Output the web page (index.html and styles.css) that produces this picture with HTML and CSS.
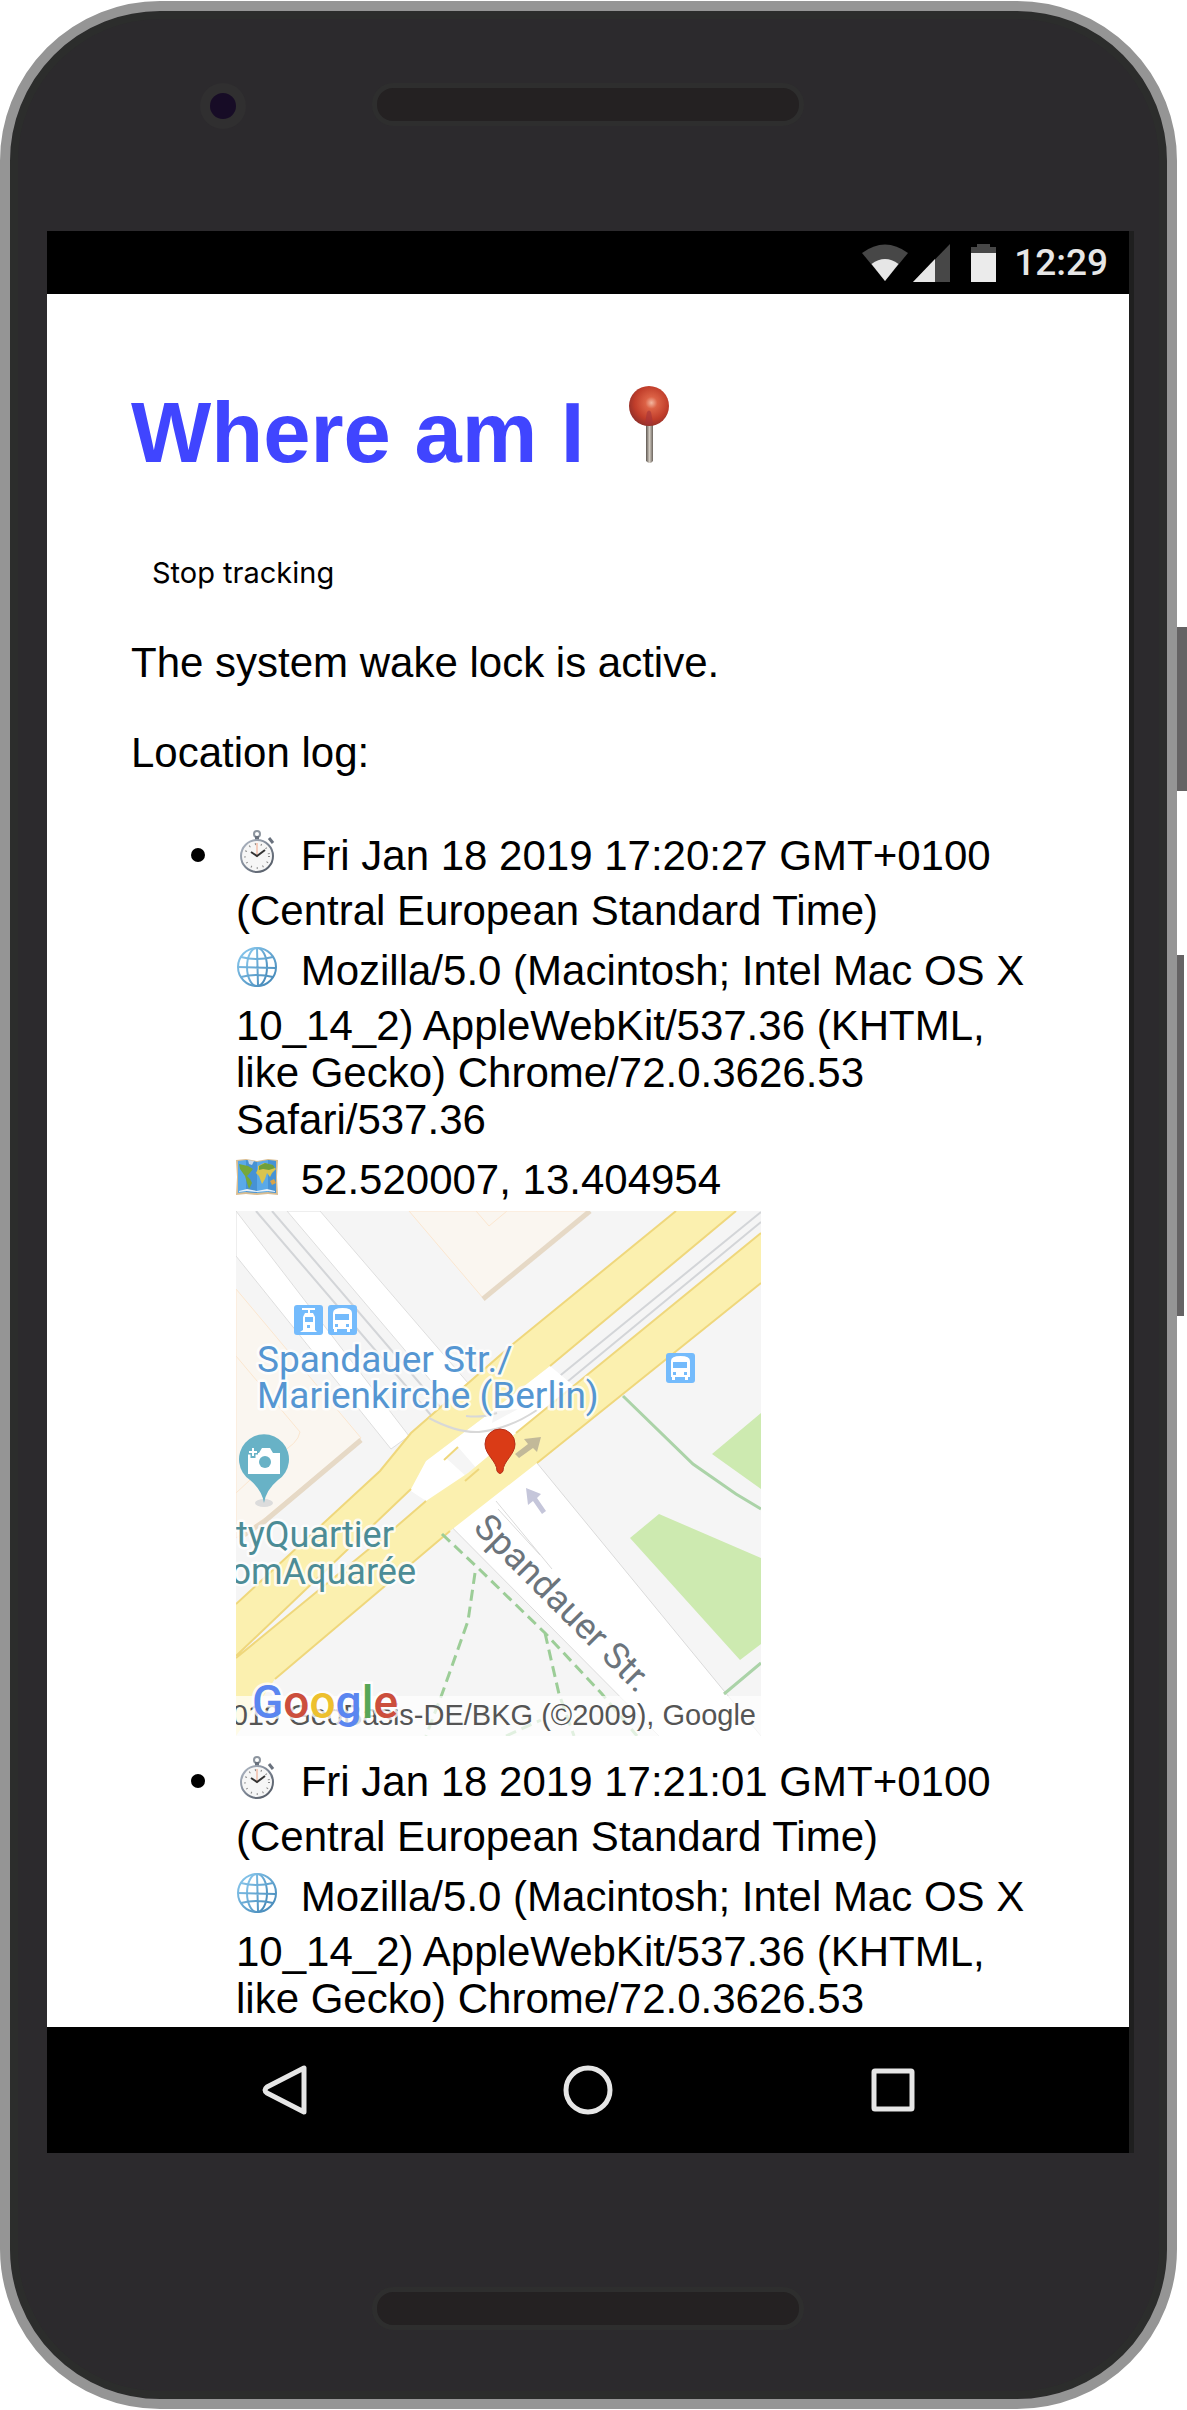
FILE: index.html
```html
<!DOCTYPE html>
<html lang="en">
<head>
<meta charset="utf-8">
<meta name="viewport" content="width=device-width, initial-scale=1">
<title>Where am I</title>
<link rel="stylesheet" href="styles.css">
</head>
<body>
<svg class="sprite" aria-hidden="true">
  <defs>
    <linearGradient id="steel" x1="0" y1="0" x2="1" y2="1"><stop offset="0" stop-color="#b4bcc8"/><stop offset=".5" stop-color="#7b8492"/><stop offset="1" stop-color="#4d535d"/></linearGradient>
    <linearGradient id="sky" x1="0" y1="0" x2="1" y2="1"><stop offset="0" stop-color="#8ccbf0"/><stop offset="1" stop-color="#3f83b4"/></linearGradient>
    <symbol id="stopwatch" viewBox="0 0 53 68">
      <circle cx="21" cy="15" r="3" fill="none" stroke="#8d959f" stroke-width="2"/>
      <path d="M19 17h4v4h-4z" fill="#69717d"/>
      <path d="M33 19l4 5" stroke="#69717d" stroke-width="3"/>
      <circle cx="21" cy="37" r="16" fill="#f6f6f6" stroke="url(#steel)" stroke-width="2"/>
      <circle cx="21" cy="37" r="12" fill="none" stroke="#888" stroke-width="2" stroke-dasharray="1 5"/>
      <path d="M21 38V24" stroke="#f0a080" stroke-width="1"/>
      <path d="M15 33l6 4 8-6" fill="none" stroke="#333" stroke-width="2"/>
    </symbol>
    <symbol id="globe" viewBox="0 0 53 68">
      <g fill="none" stroke="url(#sky)" stroke-width="2">
        <circle cx="21" cy="33" r="19"/>
        <ellipse cx="21" cy="33" rx="10" ry="19"/>
        <path d="M21 14l1 38M2 33l38 1M5 23q16 4 32 0M5 43q16-4 32 0"/>
      </g>
    </symbol>
    <symbol id="worldmap" viewBox="0 0 53 68">
      <path d="M0 17l10-1 11 2 11-2 10 1-1 17 1 18-10-1-11 1-11-1-10 1 1-18z" fill="#d9bd91"/>
      <path d="M2 18l8-1 11 2 11-2 8 1v32l-8-1-11 1-11-1-8 1z" fill="#5aa9e8"/>
      <path d="M10 17l11 2v31l-11-1zM32 17l8 1v32l-8-1z" fill="#377fc4" opacity=".55"/>
      <path d="M3 21l9 2 5 3-4 5-2 2 3 3 2 4-3 6-2-6-2-7-5-7z" fill="#76a839"/>
      <path d="M12 17l6 1-2 4-3-1z" fill="#c6d7e7"/>
      <path d="M22 23l6-3 8 2 4 4-4 4-2 4-3-4-2 6-3 5-3-8-3-3 2-4z" fill="#d9c44e"/>
      <path d="M23 23l6-3 8 2 2 3-6 2-6-1-4 1z" fill="#6f9f3b"/>
      <path d="M34 38l4-2 2 4-4 2z" fill="#d8a348"/>
      <path d="M3 48l8-2 10 2 10-2 8 2v1l-8-1-10 1-11-1-7 1z" fill="#e8f2fa"/>
    </symbol>
  </defs>
</svg>

<div class="phone">
  <div class="device">
    <div class="bezel bezel-top">
      <span class="camera"></span>
      <span class="speaker"></span>
    </div>

    <div class="screen">
      <header class="status">
        <svg width="46" height="38" viewBox="0 0 46 38" role="img" aria-label="Wi-Fi">
          <path d="M0 9Q23-8 46 9L23 37z" fill="#474747"/><path d="M9.500 20Q23 10 36.500 20L23 37z" fill="#e6e6e6"/>
        </svg>
        <svg width="37" height="38" viewBox="0 0 37 38" role="img" aria-label="Signal">
          <path d="M37 0v38H0z" fill="#474747"/><path d="M22 15v23H0z" fill="#e6e6e6"/>
        </svg>
        <svg class="battery" width="25" height="38" viewBox="0 0 25 38" role="img" aria-label="Battery">
          <path d="M6 0h13v3h6v7H0V3h6z" fill="#474747"/><path d="M0 9h25v29H0z" fill="#ebebeb"/>
        </svg>
        <span class="clock">12:29</span>
      </header>

      <main class="page">
        <h1>Where am I <svg class="pushpin" viewBox="0 0 105 94" role="img" aria-label="Pushpin">
          <defs>
            <radialGradient id="pin-head" cx=".56" cy=".42" r=".6"><stop offset="0" stop-color="#f3b7a0"/><stop offset=".25" stop-color="#dc6246"/><stop offset=".7" stop-color="#c03d2a"/><stop offset="1" stop-color="#92302a"/></radialGradient>
            <linearGradient id="pin-needle"><stop offset="0" stop-color="#5d5650"/><stop offset=".5" stop-color="#d3ccc2"/><stop offset="1" stop-color="#6b645d"/></linearGradient>
          </defs>
          <path d="M38 38h7v37q-3 4-7 0z" fill="url(#pin-needle)"/>
          <circle cx="41" cy="20" r="20" fill="url(#pin-head)"/>
          <path d="M37 37l2-11q2-3 4 0l2 11q-4 3-8 0z" fill="#a3343a" opacity=".6"/>
        </svg></h1>
        <button class="track" type="button">Stop tracking</button>
        <p>The system wake lock is active.</p>
        <p>Location log:</p>
        <ul class="log">
          <li>
            <svg class="emoji" role="img" aria-label="Time"><use href="#stopwatch"/></svg> Fri Jan 18 2019 17:20:27 GMT+0100 (Central European Standard Time)<br>
            <svg class="emoji" role="img" aria-label="Browser"><use href="#globe"/></svg> Mozilla/5.0 (Macintosh; Intel Mac OS X 10_14_2) AppleWebKit/537.36 (KHTML, like Gecko) Chrome/72.0.3626.53 Safari/537.36<br>
            <svg class="emoji" role="img" aria-label="Position"><use href="#worldmap"/></svg> 52.520007, 13.404954<br>
            <svg class="map" viewBox="0 0 525 525" role="img" aria-label="Map of Spandauer Straße, Berlin">
              <rect width="525" height="525" fill="#f5f5f5"/>
              <!-- buildings -->
              <path d="M173 0l74 87L354 0z" fill="#faf6f0" stroke="#fbe6cf"/>
              <path d="M247 88L354 0" stroke="#e6d9c6" stroke-width="5"/>
              <path d="M240 0l13 15 18-15" fill="none" stroke="#fbe6cf"/>
              <path d="M0 78l125 149-96 80-29 20z" fill="#faf6f0" stroke="#fbe6cf"/>
              <path d="M125 229L29 310 8 324" fill="none" stroke="#e6d9c6" stroke-width="5"/>
              <path d="M0 145l64 76q-2 12-22 22L0 282" fill="none" stroke="#fbe6cf"/>
              <!-- side street -->
              <path d="M0 0l173 225-18 13L0 45zM51 0l33 0 148 172-20 18z" fill="#fff" stroke="#dedede"/>
              <path d="M20 0l180 210M36 0l175 204" fill="none" stroke="#d3d5d8" stroke-width="2"/>
              <path d="M177 277l206 208 40 40h102L301 252 270 200z" fill="#fff"/>
              <path d="M177 277l246 248M301 252l224 273M260 290l56 68M262 298l42 46" fill="none" stroke="#dadada"/>
              <!-- tram bed between the carriageways -->
              <path d="M525 1L315 172M525 11L325 176" fill="none" stroke="#d3d5d8" stroke-width="2"/>
              <path d="M314 155l24 20-58 47-48 40-42 28-18-12 18-28 57-43z" fill="#fff"/>
              <path d="M222 236l20 23-10 8-22-20zM258 200l24-2-26 14z" fill="#f5f5f5"/>
              <!-- main road -->
              <path d="M440 0L277 133 175 222l-31 38L0 393v52l175-167 15-28 57-43 67-52L500 0z" fill="#fbf0af"/>
              <path d="M525 22L280 222l-48 40-42 28-29 25L0 447v78l39-57 175-148 87-68L525 72z" fill="#fbf0af"/>
              <path d="M440 0L277 133 175 222l-31 38L0 393M500 0L314 155M175 278L0 445M525 22L280 222M222 236l-14 13M243 258l-14 12M190 290l-29 25L0 447M525 72L301 252M214 320L39 468" fill="none" stroke="#efd77c" stroke-width="2"/>
              <path d="M193 207q28 15 50 14 30-3 58-22M230 205q16 2 31-3" fill="none" stroke="#d8d8d8" stroke-width="2"/>
              <!-- parks and paths -->
              <path d="M476 243l49-41v76zM394 327l29-24 102 44v86l-21 16z" fill="#cdeab0"/>
              <path d="M387 185l70 68 43 30 25 15M488 483l37-31" fill="none" stroke="#abd3a8" stroke-width="3"/>
              <path d="M206 323l36 34 67 65 57 61 35 42M239 362l-7 48-26 73-16 42M309 422l14 61 15 42M270 525l35-16" fill="none" stroke="#9ccd97" stroke-width="3" stroke-dasharray="11 6"/>
              <!-- direction arrows -->
              <path d="M279 243l13-10-4-5 17-2-4 15-4-4-14 10z" fill="#c2b999"/>
              <path d="M306 303l-9-13-5 4-2-17 15 6-4 4 9 13z" fill="#c5c6da"/>
              <!-- stops -->
              <g fill="#74bbfc">
                <rect x="58" y="94" width="29" height="30" rx="3"/><rect x="92" y="94" width="29" height="30" rx="3"/><rect x="430" y="142" width="29" height="30" rx="3"/>
              </g>
              <g fill="#fff">
                <path d="M66 97h13v2h-5v3h3l2 4v13l2 2H64l3-2v-13l2-4h3v-3h-6z"/>
                <path id="bus" d="M97 102q0-5 9.500-5t9.500 5v16h-2v3h-3v-3h-10v3h-3v-3h-1z"/><use href="#bus" x="338" y="48"/>
              </g>
              <g fill="#74bbfc">
                <path d="M69 106h8v5h-8zM71 114h3v3h-3z"/>
                <path id="bus-glass" d="M99 103h14v6H99zM99 113h3v3h-3zM110 113h3v3h-3z"/><use href="#bus-glass" x="338" y="48"/>
              </g>
              <!-- labels -->
              <g class="map-label label-transit"><text x="21" y="161">Spandauer Str./</text><text x="21" y="197">Marienkirche (Berlin)</text></g>
              <g class="map-label label-sight"><text x="0" y="336">tyQuartier</text><text x="180" y="373" text-anchor="end">omAquarée</text></g>
              <text class="map-label label-street" transform="translate(236 318) rotate(45)">Spandauer Str.</text>
              <!-- sight pin -->
              <ellipse cx="28" cy="292" rx="9" ry="4" fill="#dcdcdc"/>
              <path d="M28 292q-2-13-14-23a25 25 0 1 1 28 0q-12 10-14 23z" fill="#68b2c6"/>
              <path d="M12 242h11l3-5h8l3 5h7v21H12z" fill="#fff"/><circle cx="29" cy="251" r="6" fill="#68b2c6"/><path d="M17 236v11M12 241h10" stroke="#68b2c6" stroke-width="5"/><path d="M17 237v8M13 241h8" stroke="#fff" stroke-width="2"/>
              <!-- current position -->
              <path d="M261 260c0-10-12-16-12-27a15 15 0 0 1 30 0c0 11-12 17-12 27q-3 5-6 0z" fill="#da3b16" stroke="#b52d18"/>
              <!-- attribution -->
              <rect y="485" width="525" height="40" fill="#fff" opacity=".7"/>
              <text class="credit" x="520" y="514" text-anchor="end">019 GeoBasis-DE/BKG (©2009), Google</text>
              <text class="brand" x="16" y="507"><tspan fill="#5b86f0">G</tspan><tspan fill="#cc4f3d">o</tspan><tspan fill="#edc02e">o</tspan><tspan fill="#5b86f0">g</tspan><tspan fill="#57a656">l</tspan><tspan fill="#cc4f3d">e</tspan></text>
            </svg>
          </li>
          <li>
            <svg class="emoji" role="img" aria-label="Time"><use href="#stopwatch"/></svg> Fri Jan 18 2019 17:21:01 GMT+0100 (Central European Standard Time)<br>
            <svg class="emoji" role="img" aria-label="Browser"><use href="#globe"/></svg> Mozilla/5.0 (Macintosh; Intel Mac OS X 10_14_2) AppleWebKit/537.36 (KHTML, like Gecko) Chrome/72.0.3626.53
          </li>
        </ul>
      </main>

      <nav class="softkeys" aria-label="System">
        <button type="button" aria-label="Back"><svg width="50" height="50" viewBox="0 0 50 50"><path d="M47 3v44L10 28q-4-3 0-6z"/></svg></button>
        <button type="button" aria-label="Home"><svg width="50" height="50" viewBox="0 0 50 50"><circle cx="25" cy="25" r="22"/></svg></button>
        <button type="button" aria-label="Recent apps"><svg width="50" height="50" viewBox="0 0 50 50"><rect x="5" y="6" width="38" height="38" rx="1"/></svg></button>
      </nav>
    </div>

    <div class="bezel bezel-bottom">
      <span class="speaker"></span>
    </div>
  </div>
  <div class="side-keys"><span class="power"></span><span class="volume"></span></div>
</div>
</body>
</html>
```
FILE: styles.css
```css
* { box-sizing: border-box; }

body {
  margin: 0;
  background: #fff;
  color: #000;
  font-family: "Liberation Sans", Arial, sans-serif;
  font-size: 42px;
  line-height: 47px;
}

button {
  border: 0;
  background: none;
  color: inherit;
}

.sprite {
  position: absolute;
  width: 0;
  height: 0;
}

/* Phone body */
.phone {
  display: flex;
  height: 100vh;
  padding: 1px 0;
}

.device {
  flex: 1;
  min-width: 0;
  display: flex;
  flex-direction: column;
  padding: 0 33px 0 37px;
  border: 10px solid #959595;
  border-radius: 160px;
  background: #2c2a2d;
  box-shadow: inset 0 0 0 8px #2c2d2c;
}

.bezel {
  flex: none;
  display: grid;
  grid-template-columns: 1fr 40% 1fr;
  padding-right: 5px;
}

.bezel-top {
  height: 220px;
  padding-top: 72px;
}

.bezel-bottom {
  height: 246px;
  padding-top: 134px;
}

.speaker {
  grid-column: 2;
  height: 43px;
  border: 5px solid #2e2e2e;
  border-radius: 21px;
  background: #242122;
}

.camera {
  justify-self: end;
  width: 46px;
  height: 46px;
  margin-right: 126px;
  border: 10px solid #302f30;
  border-radius: 50%;
  background: #170c26;
}

.side-keys {
  flex: none;
  width: 10px;
  padding-top: 626px;
}

.side-keys span {
  display: block;
  background: #656364;
}

.power {
  height: 164px;
}

.side-keys .volume {
  width: 7px;
  height: 361px;
  margin-top: 164px;
}

/* Screen */
.screen {
  flex: 1;
  min-height: 0;
  display: flex;
  flex-direction: column;
  border-right: 5px solid #1f1f1f;
}

.status {
  flex: none;
  display: flex;
  align-items: center;
  justify-content: flex-end;
  gap: 5px;
  height: 63px;
  padding-right: 21px;
  background: #000;
  color: #e6e6e6;
}

.battery {
  margin: 0 13px 0 16px;
}

.clock {
  font-family: Roboto, sans-serif;
  font-size: 37px;
  font-weight: 500;
}

.page {
  flex: 1;
  min-height: 0;
  overflow: hidden;
  padding: 92px 84px 0;
  background: #fff;
}

h1 {
  margin: 0 0 68px;
  color: #4045ff;
  font-size: 85px;
  line-height: 94px;
}

.pushpin {
  width: 105px;
  height: 94px;
  vertical-align: -18px;
}

.track {
  display: block;
  padding: 8px 21px;
  font-family: Inter, sans-serif;
  font-size: 29px;
  line-height: 34px;
}

p {
  margin: 0 0 43px;
}

.track + p {
  margin-top: 41px;
}

.log {
  margin: 0;
  padding-left: 105px;
  list-style: none;
}

.log li::before {
  content: "";
  float: left;
  width: 14px;
  height: 14px;
  margin: 29px 31px 0 -45px;
  border-radius: 50%;
  background: #000;
}

.emoji {
  width: 53px;
  height: 68px;
  vertical-align: -17px;
}

.map {
  width: 525px;
  max-width: 100%;
}

.map-label {
  font-family: Roboto, sans-serif;
  font-size: 36px;
  stroke: #fff;
  stroke-width: 5px;
  stroke-linejoin: round;
  stroke-opacity: .8;
  paint-order: stroke;
}

.label-transit {
  fill: #5596d2;
  font-size: 37px;
}

.label-sight { fill: #4c8c96; }
.label-street { fill: #6b747c; }

.credit {
  fill: #555;
  font-size: 29px;
}

.brand {
  font-family: Roboto, sans-serif;
  font-size: 46px;
  font-weight: 500;
  stroke: #fff;
  stroke-width: 5px;
  stroke-opacity: .8;
  paint-order: stroke;
}

/* Navigation keys */
.softkeys {
  flex: none;
  display: flex;
  align-items: center;
  justify-content: center;
  gap: 206px;
  height: 126px;
  background: #000;
}

.softkeys button {
  display: flex;
  width: 100px;
  padding: 25px;
}

.softkeys svg {
  flex: none;
  fill: none;
  stroke: #e6e6e6;
  stroke-width: 5px;
  stroke-linejoin: round;
}
```
